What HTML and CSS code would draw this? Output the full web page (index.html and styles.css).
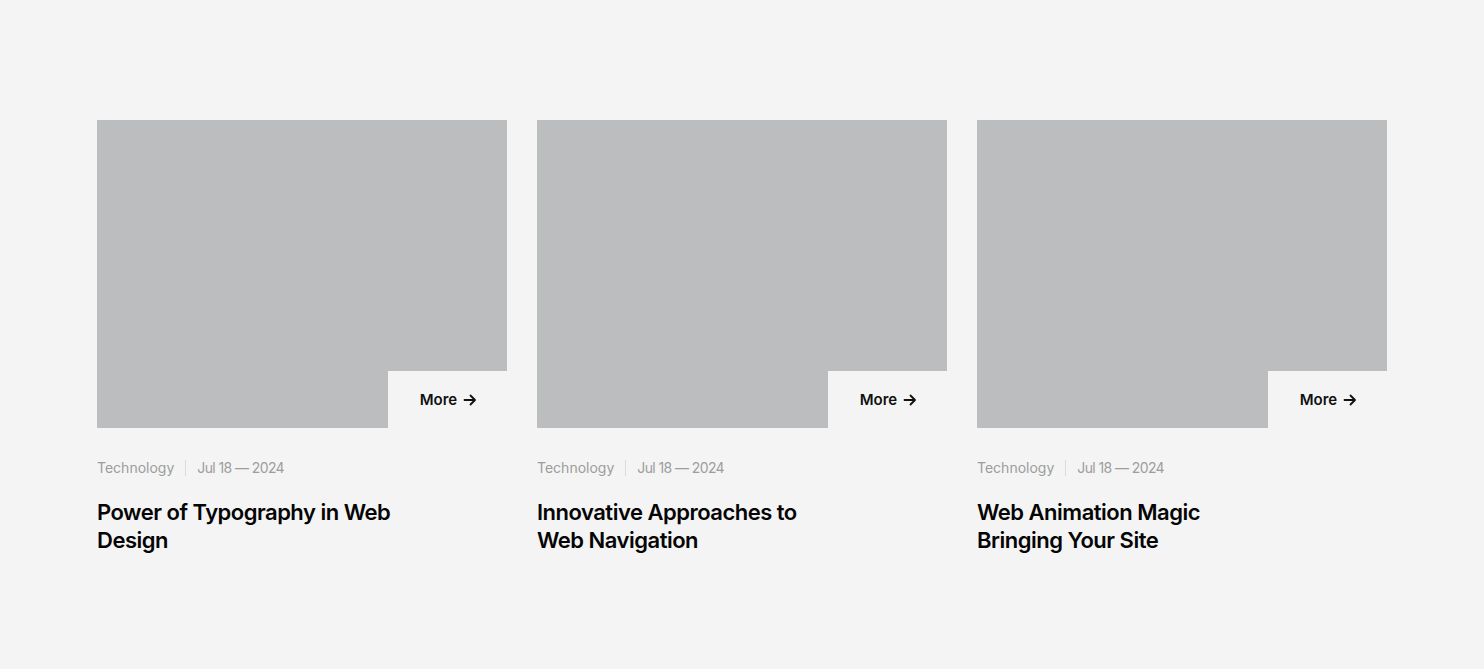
FILE: index.html
```html
<!DOCTYPE html>
<html lang="en">
<head>
<meta charset="utf-8">
<link rel="stylesheet" href="styles.css">
</head>
<body>
<section class="posts">
  <article class="card">
    <div class="thumb">
      <a class="more" href="#">More <svg width="14" height="14" viewBox="0 0 14 14"><path d="M1.5 7h10M7.5 2.5 12 7l-4.5 4.5" fill="none" stroke="#111" stroke-width="1.8" stroke-linecap="round" stroke-linejoin="round"/></svg></a>
    </div>
    <div class="meta"><span>Technology</span><span class="sep"></span><span class="date">Jul 18 — 2024</span></div>
    <h3 class="title">Power of Typography in Web Design</h3>
  </article>
  <article class="card">
    <div class="thumb">
      <a class="more" href="#">More <svg width="14" height="14" viewBox="0 0 14 14"><path d="M1.5 7h10M7.5 2.5 12 7l-4.5 4.5" fill="none" stroke="#111" stroke-width="1.8" stroke-linecap="round" stroke-linejoin="round"/></svg></a>
    </div>
    <div class="meta"><span>Technology</span><span class="sep"></span><span class="date">Jul 18 — 2024</span></div>
    <h3 class="title">Innovative Approaches to Web Navigation</h3>
  </article>
  <article class="card">
    <div class="thumb">
      <a class="more" href="#">More <svg width="14" height="14" viewBox="0 0 14 14"><path d="M1.5 7h10M7.5 2.5 12 7l-4.5 4.5" fill="none" stroke="#111" stroke-width="1.8" stroke-linecap="round" stroke-linejoin="round"/></svg></a>
    </div>
    <div class="meta"><span>Technology</span><span class="sep"></span><span class="date">Jul 18 — 2024</span></div>
    <h3 class="title">Web Animation Magic Bringing Your Site</h3>
  </article>
</section>
</body>
</html>
```
FILE: styles.css
```css
* { box-sizing: border-box; }
html, body { margin: 0; padding: 0; }
body {
  background: #f4f4f4;
  font-family: Inter, "Noto Sans", sans-serif;
  color: #0b0b0b;
}
.posts {
  width: 1290px;
  margin: 120px auto 0;
  display: grid;
  grid-template-columns: repeat(3, 410px);
  gap: 30px;
}
.thumb {
  height: 308px;
  background: #bcbdbf;
  display: flex;
  justify-content: flex-end;
  align-items: flex-end;
}
.more {
  width: 119px;
  height: 57px;
  background: #f4f4f4;
  display: flex;
  align-items: center;
  justify-content: center;
  gap: 6px;
  padding-left: 2px;
  font-size: 15px;
  font-weight: 600;
  color: #111;
  text-decoration: none;
}
.more svg { display: block; }
.meta {
  margin-top: 31px;
  display: flex;
  align-items: center;
  font-size: 14px;
  color: #9d9d9d;
  line-height: 18px;
}
.date { letter-spacing: -0.6px; }
.sep {
  width: 1px;
  height: 16px;
  background: #dcdcdc;
  margin: 0 11px;
}
.title {
  margin: 21px 0 0;
  max-width: 305px;
  font-size: 22px;
  line-height: 28px;
  font-weight: 600;
  letter-spacing: -0.5px;
  color: #050505;
}
```
